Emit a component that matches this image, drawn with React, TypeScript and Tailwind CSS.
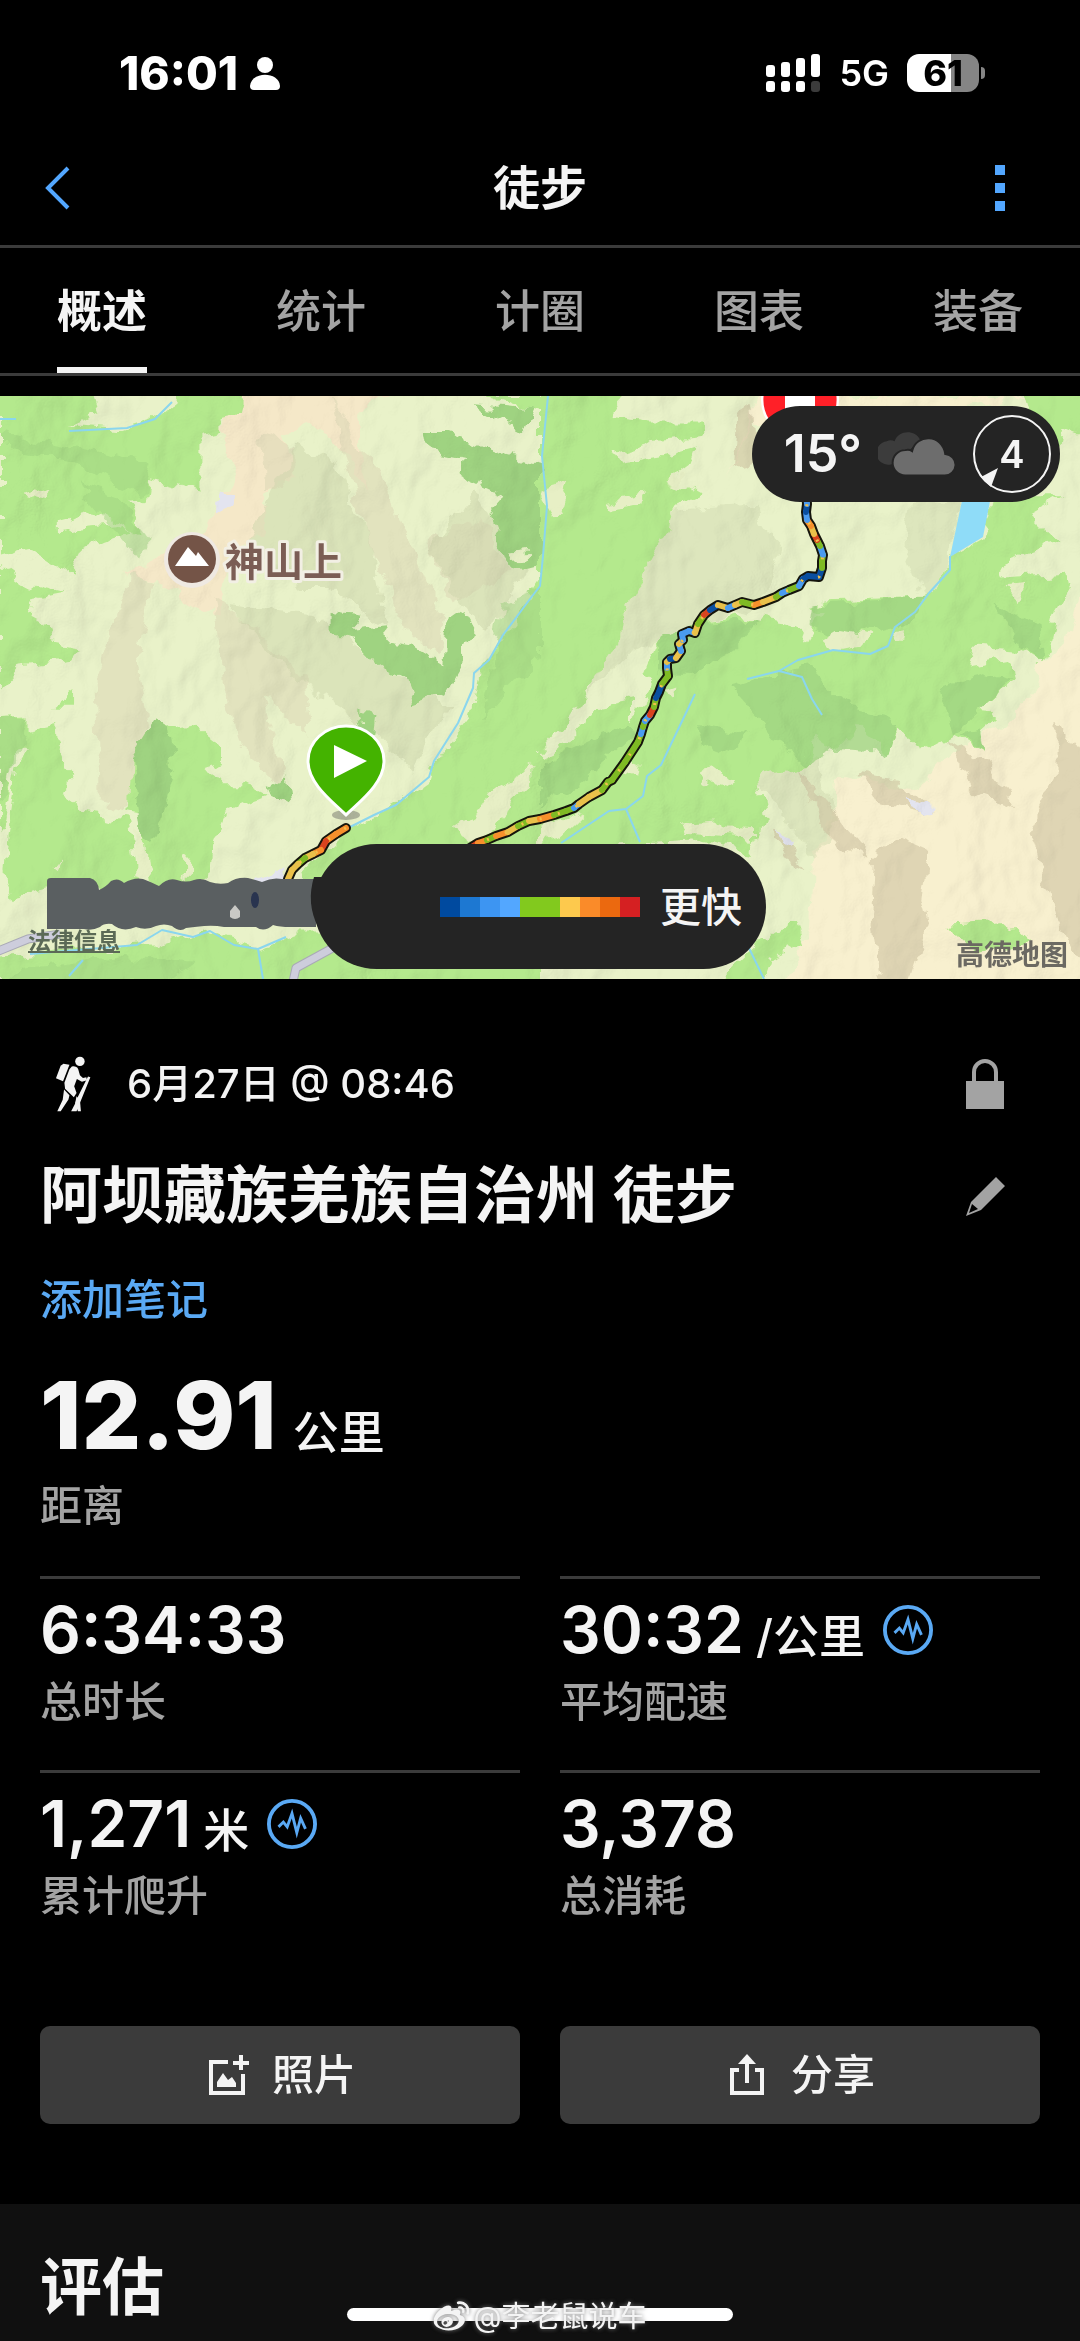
import { useState } from "react";
import { FaWeibo } from "react-icons/fa";

const TABS = ["概述", "统计", "计圈", "图表", "装备"];

const PACE_COLORS = [
  "bg-[#004a9f]",
  "bg-[#1d78d2]",
  "bg-[#3d95f2]",
  "bg-[#53a7ff]",
  "bg-[#82c91e]",
  "bg-[#82c91e]",
  "bg-[#fdc94d]",
  "bg-[#fa8b29]",
  "bg-[#eb690f]",
  "bg-[#d52022]",
];

const DB = "#0a4fa0";
const B = "#4a9bf0";
const G = "#7fba24";
const Y = "#e9c04a";
const O = "#f6902c";
const R = "#d8431f";

// [x, y, colour of the segment that ends here]
type RoutePoint = [number, number, string];

const ROUTE_START: RoutePoint[] = [
  [346, 432, O], [336, 438, O], [326, 445, O], [321, 454, R], [313, 458, O],
  [305, 462, Y], [298, 468, G], [292, 474, Y], [288, 483, Y],
];

const ROUTE_MAIN: RoutePoint[] = [
  [470, 452, O], [478, 447, R], [487, 444, O], [496, 440, G], [508, 436, O],
  [518, 430, Y], [529, 425, G], [540, 423, Y], [554, 419, O], [566, 415, G],
  [574, 412, G], [579, 408, B], [589, 401, Y], [602, 394, Y], [608, 386, G],
  [612, 384, G], [625, 366, G], [638, 346, G], [641, 338, G], [643, 331, B],
  [645, 325, G], [650, 319, B], [654, 311, R], [656, 302, G], [659, 296, DB],
  [662, 288, DB], [668, 280, G], [667, 272, G], [667, 266, B], [670, 263, Y],
  [676, 262, DB], [681, 255, Y], [679, 248, B], [683, 244, Y], [682, 238, B],
  [689, 235, B], [695, 237, B], [698, 228, Y], [704, 219, G], [710, 214, R],
  [718, 209, DB], [728, 212, Y], [735, 209, B], [742, 206, Y], [754, 209, G],
  [763, 206, O], [776, 201, Y], [782, 197, G], [789, 194, B], [799, 190, G],
  [803, 183, B], [808, 180, DB], [819, 181, DB], [822, 172, DB], [822, 165, G],
  [823, 159, G], [820, 150, B], [817, 144, G], [814, 138, R], [811, 130, Y],
  [807, 124, O], [806, 116, B], [807, 108, DB], [806, 96, B],
];

function Route({ points }: { points: RoutePoint[] }) {
  const line = points.map(([x, y]) => `${x},${y}`).join(" ");
  return (
    <g fill="none" strokeLinecap="round" strokeLinejoin="round">
      <polyline points={line} stroke="#15150c" strokeWidth="10" />
      {points.slice(1).map(([x, y, color], i) => (
        <line
          key={`${x}-${y}`}
          x1={points[i][0]}
          y1={points[i][1]}
          x2={x}
          y2={y}
          stroke={color}
          strokeWidth="6"
        />
      ))}
      <polyline
        points={line}
        stroke="#f2c04c"
        strokeWidth="3"
        strokeDasharray="2 17"
        strokeLinecap="butt"
      />
    </g>
  );
}

// Terrain is stored as two square tiles of 1568 units
function WestTile() {
  return (
    <g transform="translate(0 -6) scale(.3444 .3827)">
      <path fill="#f5e8c8" d="M700 0H1130L1040 60 1060 270 1000 150 900 90 820 110 850 230 770 270V370L660 440 640 590 560 560 450 500 360 480 470 430 590 370 690 200 640 100Z" />
      <path fill="#ded9b8" opacity=".6" d="M960 16 1040 150 1100 200 1190 400 1290 600 1270 690 1170 620 1060 380 1000 170ZM620 540 760 640 880 760 900 900 760 800 830 1030 700 940 650 760ZM380 480 440 500 400 700 430 900 360 1100 290 1080 280 740 340 590ZM760 110 850 150 840 250 770 260ZM1240 400 1400 330 1480 480 1320 560Z" />
      <path fill="#cdd5ab" opacity=".5" d="M860 130 980 200 1080 420 1120 620 960 520 860 520 720 400ZM660 560 900 580 1180 760 1300 830 1200 1000 1100 900 860 760ZM1380 260 1480 440 1530 470 1420 640 1340 560 1250 420Z" />
      <g fill="#b4e98d">
        <path d="M0 0H270L290 60 215 95 350 105 440 80 510 30V0H710L690 70 640 80V110L582 120V265L480 240 430 230 420 295 375 300 410 380 330 330 270 320 165 345V375L230 360 350 350 390 370 290 400 200 440 220 490 170 465 80 410 0 430V460L60 500 190 530 100 545 90 585 140 610 150 660 240 675 215 705 60 720 0 780Z" />
        <path d="M0 860 80 855V885L160 870 165 920 200 990 225 1025 180 1060 250 1105 370 1120 390 1230 420 1300H160L30 1330 10 1250 50 980 75 945 45 940 10 1150 0 1160Z" />
        <path d="M450 860 490 890 560 880 650 940V970L600 985 640 1030H720L780 1060 650 1110 610 1200 600 1300H440L410 1180 420 1110 370 1100 380 960 430 930Z" />
        <path d="M1568 500 1500 590 1450 650 1400 720 1370 850 1250 990 1240 1020 1100 1110 1010 1145 880 1260 930 1400H1568Z" />
        <path d="M0 1480 450 1445 600 1410 760 1460 860 1420H1568V1568H0ZM160 830 215 795V830Z" />
        <path d="M1400 16H1568V60L1450 30Z" />
      </g>
      <g fill="#9fd381">
        <path d="M960 580 1050 590 1010 630 1120 620 1130 660 1200 670 1290 720 1300 600 1340 575 1375 630 1350 670 1345 720 1300 790 1200 820 1170 750 1080 700 1030 650 960 640Z" />
        <path d="M1230 110H1300L1480 170 1568 190V460L1480 470 1420 330 1460 290 1440 260 1340 220 1350 180 1240 160ZM1370 40 1550 50 1520 110 1480 90Z" />
        <path d="M450 860 490 890 510 1000 450 1180 410 1160 380 960ZM780 1040 830 1010 840 1090 800 1080ZM1040 840 1090 860 1080 920 1050 890Z" />
        <path opacity=".5" d="M0 110 440 190 410 280 240 190 0 150ZM220 240 330 280 440 400 400 440ZM0 860 80 860 20 1050 0 1080ZM60 1510 350 1480 560 1500 480 1550H0ZM1460 560 1568 520V700L1400 860Z" />
      </g>
      <g fill="#e7efc5">
        <path d="M65 270 110 252 155 270 135 288 100 280ZM1540 990 1440 1040 1400 1100 1330 1140 1360 1190 1450 1150 1480 1070 1540 1020ZM1490 430 1530 425V445L1485 450ZM390 1150 420 1180 430 1280 390 1270ZM530 1215 548 1220 545 1280 528 1270ZM135 1245 180 1220 160 1255Z" />
      </g>
      <path fill="#e3e4ef" d="M625 285 650 262 680 270 675 298 625 315ZM755 1275 790 1250 825 1245 830 1300 740 1310Z" />
    </g>
  );
}

function EastTile() {
  return (
    <g transform="translate(540 -6) scale(.3444 .3827)">
      <path fill="#f8f0cf" d="M640 16H1420L1300 40 700 100 620 80 540 240ZM860 1010 1100 1040 1200 940 1340 880 1440 780 1450 720 1540 640 1580 500V1568H700L790 1400 800 1200 850 1120Z" />
      <path fill="#d3ddb3" opacity=".55" d="M380 310 620 300 700 420 640 560 440 620 340 650 240 700 130 800 300 490ZM1080 300 1220 300 1180 480 1110 540 1060 420ZM620 1010 800 960 860 1120 800 1230Z" />
      <g fill="#b4e98d">
        <path d="M0 0H250L200 70 330 85H470L475 120 340 130 215 165 230 190 370 170 450 150 430 200 370 240 430 250 480 275 385 310 370 370 300 490 270 550 240 600 230 660 130 790 90 850 0 950Z" />
        <path d="M0 960 90 920 160 830 270 810V860L330 770 300 740 340 650 440 610 520 600 560 590 640 600 750 615 775 650 820 580 790 570 830 550 1110 540 1180 480 1200 430 1280 390 1310 280H1520L1420 330 1500 400 1360 440 1330 490 1530 480 1540 520 1500 580 1480 660 1460 710 1400 680 1270 670 1240 720 1360 700 1370 760 1290 820 1330 860 1280 900 1290 940 1200 900 1100 950 1040 870 1010 950 920 880 860 940 800 900 780 980 630 1010 650 1130 620 1210 450 1180 0 1200Z" />
        <path d="M1400 0H1580V120L1520 100 1500 200 1430 100ZM680 1410 750 1400 770 1450 660 1490 630 1568H500L620 1460ZM1180 1400 1360 1390 1420 1440 1260 1470Z" />
      </g>
      <g fill="#9fd381" opacity=".75">
        <path d="M800 560 1110 540 1080 600 860 650 790 620ZM340 650 440 610 640 600 560 680 440 750 340 740ZM560 780 780 720 900 830 1040 860 1010 950 860 940 780 980 700 930ZM1160 770 1290 740 1360 760 1200 900ZM0 980 250 870 270 900 120 1020 0 1080ZM1220 900 1280 890 1290 940ZM1320 560 1450 620 1460 710 1380 660ZM450 870 600 900 500 960Z" />
      </g>
      <g fill="#e7efc5">
        <path d="M10 260 85 240 60 310 70 320 40 335 10 290ZM195 290 300 270 290 295 200 305ZM365 235 420 220 400 245ZM820 655 870 630 965 645 950 670 850 680ZM1030 625 1060 620 1055 655 1025 655ZM470 1000 515 990 555 1015 520 1035 475 1025ZM415 1125 500 1120 540 1140 630 1145V1170L430 1160ZM1340 520 1410 515 1390 550ZM240 1000 290 970 285 1010ZM360 790 390 780 385 810ZM0 1150 135 1105 60 1170 0 1185Z" />
      </g>
      <path fill="#cfc3a2" opacity=".6" d="M1500 860 1580 960V1520L1500 1380 1420 1150 1500 1000ZM970 1220 1050 1170 1130 1200 1110 1330 1130 1400 1070 1568H990L960 1400ZM1180 910 1300 980 1380 1090 1260 1050ZM920 1000 1050 1020 1140 1110 970 1080ZM740 980 830 1080 960 1220 860 1190 790 1080ZM570 60 620 30 640 180 560 200ZM680 1150 780 1250 700 1210Z" />
      <path fill="#e3e4ef" d="M1065 1068 1140 1095 1135 1115 1075 1090ZM690 1155 725 1170 705 1190Z" />
    </g>
  );
}

function ActivityMap() {
  return (
    <svg
      className="block h-full w-full"
      viewBox="0 0 1080 583"
      preserveAspectRatio="xMidYMid slice"
      role="img"
      aria-label="徒步路线"
    >
      <defs>
        <filter id="edges" x="0" y="0" width="1080" height="583" filterUnits="userSpaceOnUse">
          <feTurbulence type="fractalNoise" baseFrequency=".05" numOctaves="3" seed="4" />
          <feDisplacementMap
            in="SourceGraphic"
            scale="20"
            xChannelSelector="R"
            yChannelSelector="G"
          />
        </filter>
        <filter id="relief" x="0" y="0" width="1080" height="583" filterUnits="userSpaceOnUse">
          <feTurbulence type="fractalNoise" baseFrequency=".012 .009" numOctaves="4" seed="11" />
          <feColorMatrix values="0 0 0 0 0  0 0 0 0 0  0 0 0 0 0  1 0 0 0 0" />
          <feDiffuseLighting surfaceScale="16" diffuseConstant="1.1" lightingColor="#ffffff">
            <feDistantLight azimuth="215" elevation="62" />
          </feDiffuseLighting>
        </filter>
      </defs>
      <rect width="1080" height="583" fill="#e9f2c9" />
      <g filter="url(#edges)">
        <rect width="1080" height="583" fill="#e9f2c9" />
        <WestTile />
        <EastTile />
      </g>
      <rect
        width="1080"
        height="583"
        filter="url(#relief)"
        opacity=".26"
        className="mix-blend-multiply"
      />

      {/* Rivers and lake */}
      <path fill="#8fdcf8" d="M963 100H991L983 141 950 161Z" />
      <g fill="none" stroke="#8ad6ee" strokeWidth="2" strokeLinejoin="round">
        <path d="M548 0 542 60 547 110 543 160 540 190 530 203 503 239 489 264 474 277 473 292 458 327 434 365 429 381 396 409 374 419 348 432" />
        <path d="M0 23H16M69 35 127 32 155 23 172 6" />
        <path d="M950 160V174L929 197 915 216 895 231 888 250 870 258 833 254 798 264 779 275 802 281 812 303 822 319M779 275 747 283" />
        <path d="M695 298 685 319 661 369 647 380 643 400 626 413 609 415 561 447M626 413 640 446" />
        <path d="M30 558 137 549 162 534 193 541 210 535 234 549 258 553 286 541M258 553 263 583M69 580 83 564M748 550 764 583" />
      </g>
      <g fill="none" strokeLinejoin="round">
        <path stroke="#a9a9b6" strokeWidth="9" d="M-4 556 28 543 60 538M292 590 296 572 340 548" />
        <path stroke="#cdcddc" strokeWidth="7" d="M-4 556 28 543 60 538M292 590 296 572 340 548" />
      </g>

      <Route points={ROUTE_START} />
      <Route points={ROUTE_MAIN} />

      {/* Finish marker */}
      <circle cx="800" cy="4" r="39" fill="#fff" />
      <path fill="#ff2028" d="M785-29V37A36 36 0 0 1 785-29ZM815-29V37A36 36 0 0 0 815-29Z" />

      {/* Start marker */}
      <ellipse cx="346" cy="419" rx="14" ry="5" fill="#555" opacity=".4" />
      <path
        fill="#44b300"
        stroke="#fff"
        strokeWidth="3"
        d="M346 419C333 406 308 388 308 365A38 35 0 0 1 384 365C384 388 359 406 346 419Z"
      />
      <path fill="#fff" d="M334 349 367 365 334 382Z" />

      {/* Peak */}
      <circle cx="192" cy="164" r="28" fill="#efe9e2" />
      <circle cx="192" cy="163" r="24" fill="#745447" />
      <path fill="#fff" d="M175 170 188 151 196 160 198 156 209 170Z" />
      <text
        x="225"
        y="180"
        fontSize="39"
        fontWeight="700"
        fill="#7b5d54"
        stroke="#f2efe4"
        strokeWidth="6"
        paintOrder="stroke"
        strokeLinejoin="round"
      >
        神山上
      </text>
    </svg>
  );
}

function WeatherBadge() {
  return (
    <div className="absolute top-2.5 right-5 flex h-24 items-center gap-4 rounded-full bg-[#242424] pr-2 pl-8">
      <span className="text-[52px] leading-none font-semibold">15°</span>
      <svg width="78" height="46" viewBox="0 0 80 46" aria-hidden="true">
        <path fill="#3c3c3c" d="M12 34A12 12 0 0 1 9 10Q13 8 17 10C21-2 38-2 43 8L20 32Z" />
        <path
          fill="#6d6d6d"
          stroke="#242424"
          strokeWidth="2"
          d="M28 45A13 13 0 0 1 28 19Q32 18 35 20C39 2 66 2 69 23A11 11 0 0 1 68 45Z"
        />
      </svg>
      <span className="relative flex size-20 items-center justify-center text-[38px] leading-none font-semibold">
        <svg className="absolute inset-0" width="80" height="80" viewBox="0 0 80 80" aria-hidden="true">
          <circle cx="40" cy="40" r="38" fill="none" stroke="#f4f4f4" strokeWidth="2" />
          <path fill="#f4f4f4" d="M26 54 9 63 19 73Z" />
        </svg>
        4
      </span>
    </div>
  );
}

function StatusBar() {
  return (
    <div className="flex h-[146px] items-center justify-between pr-[95px] pl-[119px] text-white">
      <div className="flex items-center gap-3">
        <span className="text-[46px] leading-none font-extrabold">16:01</span>
        <svg width="30" height="33" viewBox="0 0 30 33" fill="currentColor" aria-hidden="true">
          <circle cx="15" cy="8" r="8" />
          <path d="M0 29C1 14 29 14 30 29Q30 33 26 33H4Q0 33 0 29Z" />
        </svg>
      </div>
      <div className="flex items-center gap-[18px]">
        <svg width="55" height="38" viewBox="0 0 55 38" fill="currentColor" aria-hidden="true">
          <rect x="0" y="11" width="9" height="12" rx="3" />
          <rect x="15" y="8" width="9" height="15" rx="3" />
          <rect x="30" y="4" width="9" height="19" rx="3" />
          <rect x="45" y="0" width="9" height="23" rx="3" />
          <rect x="0" y="27" width="9" height="11" rx="3" />
          <rect x="15" y="27" width="9" height="11" rx="3" />
          <rect x="30" y="27" width="9" height="11" rx="3" />
          <rect x="45" y="27" width="9" height="11" rx="3" fill="#3b3b3b" />
        </svg>
        <span className="text-[36px] leading-10 font-semibold">5G</span>
        <div className="flex items-center gap-0.5">
          <div className="flex h-[38px] w-[72px] items-center justify-center rounded-xl bg-linear-to-r from-white from-61% to-[#858585] to-61% text-[36px] leading-none font-extrabold text-black">
            61
          </div>
          <div className="h-3 w-1 rounded-r-full bg-[#858585]" />
        </div>
      </div>
    </div>
  );
}

function PulseIcon() {
  return (
    <svg
      width="50"
      height="50"
      viewBox="0 0 52 52"
      fill="none"
      stroke="#5aa9f4"
      strokeWidth="4"
      aria-hidden="true"
    >
      <circle cx="26" cy="26" r="24" />
      <path d="M12 29 17 24 21 29 26 15 31 35 35 20 40 31" strokeWidth="3" />
    </svg>
  );
}

function HikerIcon() {
  return (
    <svg width="36" height="56" viewBox="45 49 105 166" fill="#f4f4f4" aria-hidden="true">
      <circle cx="118" cy="65" r="14" />
      <path d="M69 72 87 75 68 124 47 115 61 78Z" />
      <path d="M94 80Q108 78 113 88L118 106 127 114 137 112 139 121 124 125 109 117 101 139 108 159 100 171 74 146 72 128 87 88Z" />
      <path d="M71 148 87 165 84 178 61 213H51L67 179Z" />
      <path d="M142 110 149 112 108 213H92L104 190 108 178Z" />
      <path d="M108 168 118 180 121 213H112L104 188Z" />
    </svg>
  );
}

interface StatProps {
  value: string;
  unit?: string;
  label: string;
  hasPulse?: boolean;
}

function Stat({ value, unit, label, hasPulse }: StatProps) {
  return (
    <div className="h-[194px] border-t-[3px] border-[#3b3b3b] pt-[11px]">
      <dd className="flex items-baseline gap-3">
        <span className="text-[64px] leading-[80px] font-semibold">{value}</span>
        {unit && <span className="text-[46px] leading-[60px] font-medium">{unit}</span>}
        {hasPulse && (
          <button type="button" className="ml-1.5 self-center" aria-label={`${label}详情`}>
            <PulseIcon />
          </button>
        )}
      </dd>
      <dt className="mt-1 text-[42px] leading-[56px] font-medium text-[#a3a3a3]">{label}</dt>
    </div>
  );
}

export default function App() {
  const [activeTab, setActiveTab] = useState(TABS[0]);

  return (
    <div className="relative flex min-h-screen flex-col bg-black font-['Inter','Noto_Sans_CJK_SC',sans-serif] text-[#f4f4f4]">
      <StatusBar />

      <header className="flex h-[102px] items-center border-b-[3px] border-[#3b3b3b] pr-[60px] pb-4 pl-11">
        <button type="button" aria-label="返回" className="w-14">
          <svg width="30" height="44" viewBox="0 0 30 44" fill="none" stroke="#53a7ff" strokeWidth="4" aria-hidden="true">
            <path d="M24 2 4 22 24 42" />
          </svg>
        </button>
        <h1 className="flex-1 text-center text-[47px] leading-[60px] font-bold">徒步</h1>
        <button type="button" aria-label="更多" className="flex w-10 flex-col items-center gap-2">
          <span className="size-2.5 bg-[#53a7ff]" />
          <span className="size-2.5 bg-[#53a7ff]" />
          <span className="size-2.5 bg-[#53a7ff]" />
        </button>
      </header>

      <nav className="flex justify-between border-b-[3px] border-[#3b3b3b] px-[57px]">
        {TABS.map((tab) => (
          <button
            key={tab}
            type="button"
            onClick={() => setActiveTab(tab)}
            className={
              tab === activeTab
                ? "h-[125px] border-b-[6px] border-[#f4f4f4] pt-2 text-[45px] leading-[60px] font-bold"
                : "h-[125px] border-b-[6px] border-transparent pt-2 text-[45px] leading-[60px] font-medium text-[#a3a3a3]"
            }
          >
            {tab}
          </button>
        ))}
      </nav>

      {/* Map */}
      <section className="relative mt-5 h-[583px] overflow-hidden">
        <ActivityMap />
        <WeatherBadge />
        <div className="absolute bottom-2.5 left-1/2 flex h-[125px] w-[452px] -translate-x-1/2 items-center justify-end gap-5 rounded-full bg-[#242424] pr-6">
          <div className="flex">
            {PACE_COLORS.map((color, i) => (
              <span key={i} className={`h-5 w-5 ${color}`} />
            ))}
          </div>
          <span className="text-[41px] leading-[56px] font-medium">更快</span>
        </div>
        <svg
          className="absolute bottom-12 left-[46px]"
          width="290"
          height="54"
          viewBox="0 0 290 54"
          aria-hidden="true"
        >
          <path
            fill="#5a5f61"
            d="M1 4Q1 1 5 1H44Q52 3 53 13Q60 10 65 4Q72 0 78 6Q88 0 97 2Q105 5 113 9Q122 0 131 3Q140 6 148 3Q156 0 164 5Q173 8 182 6Q190 0 202 1Q210 3 216 5Q226 0 236 2H270V50H244Q234 50 227 48Q218 56 210 50H178Q168 48 158 49Q148 50 140 51Q134 56 126 49Q118 46 110 49Q100 54 90 50Q76 56 66 47Q58 46 54 50Q46 54 38 52H1Z"
          />
          <path fill="#242424" d="M268 0H290V50H272Q260 26 268 0Z" />
          <ellipse cx="209" cy="23" rx="4" ry="8" fill="#29344f" />
          <path fill="#c9c9c5" d="M189 28 194 34V40Q189 44 184 40V34Z" />
        </svg>
        <a
          href="#legal"
          className="absolute bottom-6 left-7 text-[23px] leading-7 font-bold text-[#5b6a56] underline underline-offset-2"
        >
          法律信息
        </a>
        <span className="absolute right-3 bottom-2 text-[28px] leading-8 font-bold text-[#6b6962]">
          高德地图
        </span>
      </section>

      <main className="px-10 pt-[73px]">
        <div className="flex h-16 items-center justify-between pr-[35px] pl-[15px]">
          <div className="flex items-center gap-9">
            <HikerIcon />
            <time className="text-[40px] leading-[56px] font-medium">6月27日 @ 08:46</time>
          </div>
          <svg width="40" height="52" viewBox="0 0 40 52" aria-label="私密" role="img">
            <path d="M9 24V14A11 11 0 0 1 31 14V24" fill="none" stroke="#a3a3a3" strokeWidth="4" />
            <path d="M1 23H39V51H1Z" fill="#a3a3a3" />
          </svg>
        </div>

        <div className="mt-10 flex items-center justify-between pr-[35px]">
          <h2 className="text-[62px] leading-[80px] font-bold">阿坝藏族羌族自治州 徒步</h2>
          <button type="button" aria-label="编辑名称">
            <svg width="40" height="40" viewBox="0 0 40 40" fill="#a3a3a3" aria-hidden="true">
              <path d="M31 1 40 10 16 34 1 40 6 26ZM7 28 4 37 13 33Z" fillRule="evenodd" />
            </svg>
          </button>
        </div>

        <a href="#notes" className="mt-9 block text-[42px] leading-[56px] font-medium text-[#5aa9f4]">
          添加笔记
        </a>

        <dl>
          <dd className="mt-8 flex items-baseline gap-4">
            <span className="text-[94px] leading-[110px] font-extrabold">12.91</span>
            <span className="text-[46px] leading-[60px] font-medium">公里</span>
          </dd>
          <dt className="mt-2 text-[42px] leading-[56px] font-medium text-[#a3a3a3]">距离</dt>
        </dl>

        <dl className="mt-[42px] grid grid-cols-2 gap-x-10">
          <Stat value="6:34:33" label="总时长" />
          <Stat value="30:32" unit="/公里" label="平均配速" hasPulse />
          <Stat value="1,271" unit="米" label="累计爬升" hasPulse />
          <Stat value="3,378" label="总消耗" />
        </dl>

        <div className="mt-[62px] grid grid-cols-2 gap-10 text-[42px] leading-[56px] font-medium">
          <button
            type="button"
            className="flex h-[98px] items-center justify-center gap-[22px] rounded-[10px] bg-[#3b3b3b] pl-1"
          >
            <svg width="42" height="42" viewBox="0 0 42 42" fill="none" stroke="currentColor" strokeWidth="4" aria-hidden="true">
              <path d="M20 8H3V39H35V20M33 1V16M25 9H41" />
              <path d="M9 33V28L15 19 20 26 24 23 28 29V33Z" fill="currentColor" stroke="none" />
            </svg>
            照片
          </button>
          <button
            type="button"
            className="flex h-[98px] items-center justify-center gap-[26px] rounded-[10px] bg-[#3b3b3b] pl-1"
          >
            <svg width="36" height="42" viewBox="0 0 36 42" fill="none" stroke="currentColor" strokeWidth="4" aria-hidden="true">
              <path d="M10 16H3V39H33V16H26M18 29V6" />
              <path d="M18 0 27 10H9Z" fill="currentColor" stroke="none" />
            </svg>
            分享
          </button>
        </div>
      </main>

      <section className="mt-20 flex-1 bg-[#101010] px-10 pt-11">
        <h2 className="text-[62px] leading-[80px] font-bold">评估</h2>
      </section>

      <div className="absolute bottom-5 left-1/2 h-[13px] w-[386px] -translate-x-1/2 rounded-full bg-white" />
      <div className="absolute bottom-1.5 left-1/2 flex -translate-x-1/2 items-center gap-1 text-[29px] leading-9 whitespace-nowrap text-[#f4f4f4] text-shadow-[0_0_4px_#777]">
        <FaWeibo className="size-9 drop-shadow-[0_0_2px_#777]" />
        @李老鼠说车
      </div>
    </div>
  );
}
